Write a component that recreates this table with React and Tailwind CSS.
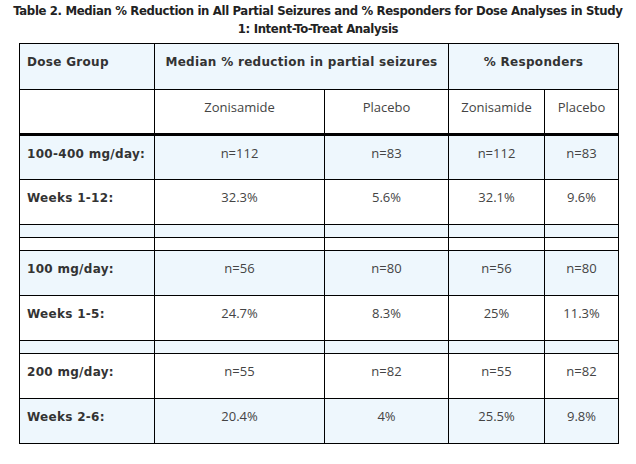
const rows = [
  { label: "100-400 mg/day:", vals: ["n=112", "n=83", "n=112", "n=83"], blue: true },
  { label: "Weeks 1-12:", vals: ["32.3%", "5.6%", "32.1%", "9.6%"], blue: false },
  { empty: true, blue: true },
  { empty: true, blue: false },
  { label: "100 mg/day:", vals: ["n=56", "n=80", "n=56", "n=80"], blue: true },
  { label: "Weeks 1-5:", vals: ["24.7%", "8.3%", "25%", "11.3%"], blue: false },
  { empty: true, blue: true },
  { label: "200 mg/day:", vals: ["n=55", "n=82", "n=55", "n=82"], blue: false },
  { label: "Weeks 2-6:", vals: ["20.4%", "4%", "25.5%", "9.8%"], blue: true },
];

const head = "border border-black align-top pt-[9px] text-[12px] leading-[18px] font-bold text-[#333] [font-family:'DejaVu_Sans',sans-serif]";
const cell = "border border-black align-top pt-[8px] text-center text-[13px] leading-[18px] text-[#444] [font-family:'Open_Sans',sans-serif]";

export default function App() {
  return (
    <div className="w-[636px] h-[464px] bg-white overflow-hidden">
      <div className="pt-[2px] w-[636px] text-center whitespace-nowrap text-[13px] tracking-[-0.35px] leading-[18px] font-bold text-[#222] [font-family:'DejaVu_Sans_Condensed',sans-serif]">
        Table 2. Median % Reduction in All Partial Seizures and % Responders for Dose Analyses in Study
        <br />
        1: Intent-To-Treat Analysis
      </div>
      <table className="ml-[19px] mt-[5px] w-[599px] table-fixed border-collapse">
        <colgroup>
          <col className="w-[135px]" />
          <col className="w-[170px]" />
          <col className="w-[124px]" />
          <col className="w-[96px]" />
          <col className="w-[74px]" />
        </colgroup>
        <thead>
          <tr className="h-[46px] bg-[#eef7fd]">
            <th className={head + " text-left pl-[7px] tracking-[0.3px]"}>Dose Group</th>
            <th colSpan={2} className={head + " text-center tracking-[0.3px]"}>Median % reduction in partial seizures</th>
            <th colSpan={2} className={head + " text-center tracking-[0.3px]"}>% Responders</th>
          </tr>
          <tr className="h-[45px] bg-white">
            <td className="border border-black border-b-[3px]"></td>
            <td className={cell + " border-b-[3px]"}>Zonisamide</td>
            <td className={cell + " border-b-[3px]"}>Placebo</td>
            <td className={cell + " border-b-[3px]"}>Zonisamide</td>
            <td className={cell + " border-b-[3px]"}>Placebo</td>
          </tr>
        </thead>
        <tbody>
          {rows.map((r, i) =>
            r.empty ? (
              <tr key={i} className={"h-[13px] " + (r.blue ? "bg-[#eef7fd]" : "bg-white")}>
                <td className="border border-black"></td>
                <td className="border border-black"></td>
                <td className="border border-black"></td>
                <td className="border border-black"></td>
                <td className="border border-black"></td>
              </tr>
            ) : (
              <tr key={i} className={"h-[45px] " + (r.blue ? "bg-[#eef7fd]" : "bg-white")}>
                <td className={head + " text-left pl-[7px] tracking-[0.3px]"}>{r.label}</td>
                {r.vals.map((v, j) => (
                  <td key={j} className={cell}>{v}</td>
                ))}
              </tr>
            )
          )}
        </tbody>
      </table>
    </div>
  );
}
